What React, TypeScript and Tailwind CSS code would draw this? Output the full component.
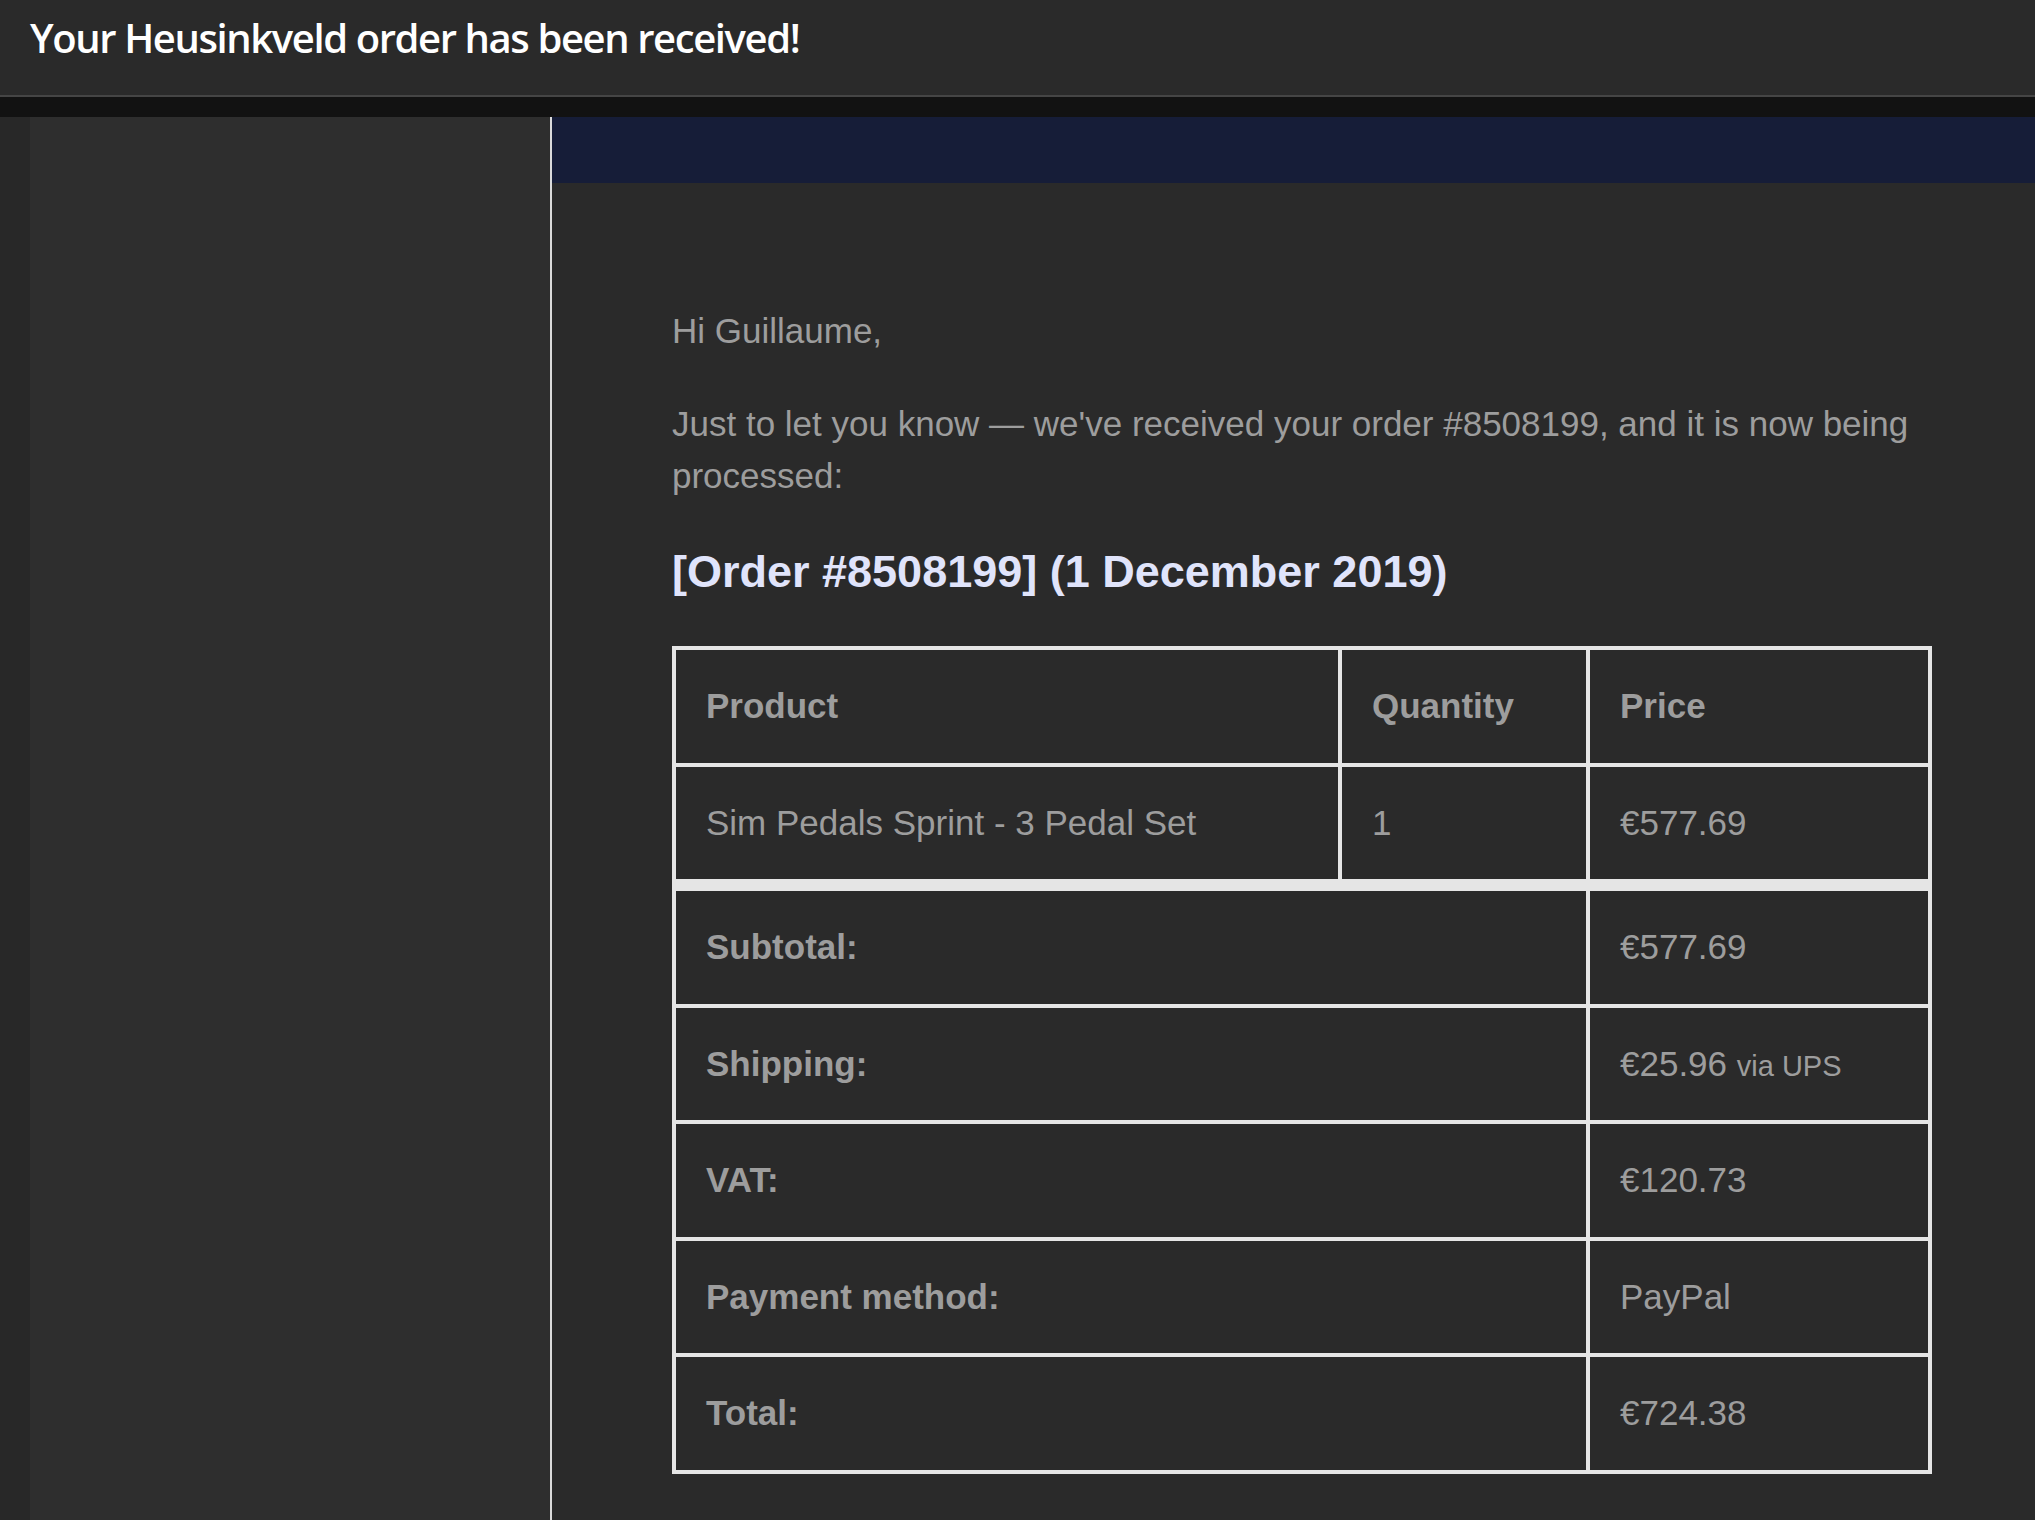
const rows = [
  { label: "Subtotal:", value: "€577.69" },
  { label: "Shipping:", value: "€25.96", note: "via UPS" },
  { label: "VAT:", value: "€120.73" },
  { label: "Payment method:", value: "PayPal" },
  { label: "Total:", value: "€724.38" },
];

export default function App() {
  return (
    <div className="flex h-[1520px] w-[2035px] flex-col overflow-hidden bg-[#2a2a2a]">
      {/* window title */}
      <div className="h-[97px] shrink-0 border-b-2 border-[#454545] bg-[#2a2a2a] pl-[30px] pt-[18px]">
        <h1 className="font-['Open_Sans',sans-serif] text-[40px] font-semibold leading-[40px] tracking-[-1.4px] text-white">
          Your Heusinkveld order has been received!
        </h1>
      </div>
      <div className="h-[20px] shrink-0 bg-[#121212]" />

      <div className="flex min-h-0 flex-1">
        <div className="w-[30px] shrink-0 bg-[#282828]" />
        <div className="w-[520px] shrink-0 bg-[#2e2e2e]" />
        <div className="w-[2px] shrink-0 bg-[#dadada]" />

        <div className="flex min-w-0 flex-1 flex-col overflow-hidden">
          <div className="h-[66px] shrink-0 bg-[#161d38]" />

          <div className="w-[1500px] shrink-0 px-[120px] pt-[122px] font-['Liberation_Sans',Arial,sans-serif] text-[35px] leading-[1.5] text-[#9d9d9d]">
            <p className="mb-[40px]">Hi Guillaume,</p>
            <p className="mb-[40px]">
              Just to let you know — we've received your order #8508199, and it
              is now being processed:
            </p>

            <h2 className="mb-[45px] text-[45px] font-bold leading-[1.3] text-[#e0e4fb]">
              [Order #8508199] (1 December 2019)
            </h2>

            <table className="w-full border-separate border-spacing-0 border-2 border-[#e5e5e5] text-left">
              <thead>
                <tr>
                  <th className="w-[666px] border-2 border-[#e5e5e5] p-[30px] font-bold">
                    Product
                  </th>
                  <th className="w-[248px] border-2 border-[#e5e5e5] p-[30px] font-bold">
                    Quantity
                  </th>
                  <th className="border-2 border-[#e5e5e5] p-[30px] font-bold">
                    Price
                  </th>
                </tr>
              </thead>
              <tbody>
                <tr>
                  <td className="border-2 border-[#e5e5e5] p-[30px]">
                    Sim Pedals Sprint - 3 Pedal Set
                  </td>
                  <td className="border-2 border-[#e5e5e5] p-[30px]">1</td>
                  <td className="border-2 border-[#e5e5e5] p-[30px]">€577.69</td>
                </tr>
              </tbody>
              <tfoot>
                {rows.map((r, i) => (
                  <tr key={r.label}>
                    <th
                      colSpan={2}
                      className={
                        i === 0
                          ? "border-2 border-t-[10px] border-[#e5e5e5] p-[30px] font-bold"
                          : "border-2 border-[#e5e5e5] p-[30px] font-bold"
                      }
                    >
                      {r.label}
                    </th>
                    <td
                      className={
                        i === 0
                          ? "border-2 border-t-[10px] border-[#e5e5e5] p-[30px]"
                          : "border-2 border-[#e5e5e5] p-[30px]"
                      }
                    >
                      {r.value}
                      {r.note && (
                        <>
                          {" "}
                          <small className="text-[29px]">{r.note}</small>
                        </>
                      )}
                    </td>
                  </tr>
                ))}
              </tfoot>
            </table>
          </div>
        </div>
      </div>
    </div>
  );
}
